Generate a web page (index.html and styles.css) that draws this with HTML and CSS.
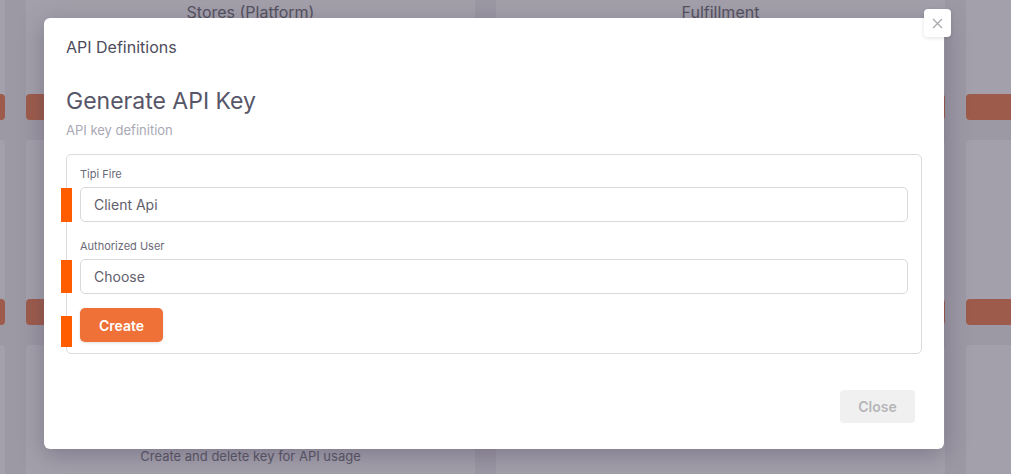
FILE: index.html
```html
<!DOCTYPE html>
<html>
<head>
<meta charset="utf-8">
<link rel="stylesheet" href="styles.css">
</head>
<body>
<div class="board">
  <div class="row">
    <div class="card"><div class="card-btn"></div></div>
    <div class="card"><div class="card-title">Stores (Platform)</div><div class="card-btn"></div></div>
    <div class="card"><div class="card-title">Fulfillment</div><div class="card-btn"></div></div>
    <div class="card"><div class="card-btn"></div></div>
  </div>
  <div class="row">
    <div class="card"><div class="card-btn"></div></div>
    <div class="card"><div class="card-btn"></div></div>
    <div class="card"><div class="card-btn"></div></div>
    <div class="card"><div class="card-btn"></div></div>
  </div>
  <div class="row">
    <div class="card"><div class="card-btn"></div></div>
    <div class="card"><div class="card-desc">Create and delete key for API usage</div><div class="card-btn"></div></div>
    <div class="card"><div class="card-btn"></div></div>
    <div class="card"><div class="card-btn"></div></div>
  </div>
</div>

<div class="overlay">
  <div class="modal">
    <button class="x-btn" aria-label="close">
      <svg width="11" height="11" viewBox="0 0 11 11"><path d="M1 1L10 10M10 1L1 10" stroke="#a9a9b0" stroke-width="1.3" fill="none"/></svg>
    </button>
    <div class="modal-header">API Definitions</div>
    <div class="modal-body">
      <h1 class="title">Generate API Key</h1>
      <div class="subtitle">API key definition</div>
      <div class="fieldset">
        <div class="field">
          <span class="marker m1"></span>
          <label class="label">Tipi Fire</label>
          <div class="input">Client Api</div>
        </div>
        <div class="field">
          <span class="marker m2"></span>
          <label class="label">Authorized User</label>
          <div class="input">Choose</div>
        </div>
        <div class="field actions">
          <span class="marker m3"></span>
          <button class="btn-create">Create</button>
        </div>
      </div>
    </div>
    <div class="modal-footer">
      <button class="btn-close">Close</button>
    </div>
  </div>
</div>
</body>
</html>
```

FILE: styles.css
```css
* { box-sizing: border-box; }
html, body { margin: 0; padding: 0; }
body {
  width: 1011px;
  height: 474px;
  overflow: hidden;
  background: #9c98a4;
  font-family: Inter, "Noto Sans", sans-serif;
  position: relative;
}
.board {
  display: flex;
  flex-direction: column;
  gap: 20px;
  margin-left: -444px;
  margin-top: -65px;
}
.row {
  display: flex;
  gap: 21px;
}
.card {
  flex: 0 0 449px;
  height: 185px;
  background: #a3a0ab;
  border-radius: 4px;
  position: relative;
  display: flex;
  flex-direction: column;
  align-items: center;
}
.card-title {
  margin-top: 67px;
  font-size: 16px;
  color: #55525f;
}
.card-desc {
  margin-top: auto;
  margin-bottom: 40px;
  font-size: 13px;
  color: #5a5766;
}
.card-btn {
  margin-top: auto;
  width: 100%;
  height: 26px;
  background: #9d5c4b;
  border-radius: 4px;
}
.card-desc + .card-btn { margin-top: 0; }

.overlay {
  position: absolute;
  inset: 0;
}
.modal {
  position: absolute;
  left: 44px;
  top: 18px;
  width: 900px;
  height: 431px;
  background: #fff;
  border-radius: 6px;
  box-shadow: 0 6px 24px rgba(60, 50, 80, 0.35);
  display: flex;
  flex-direction: column;
}
.x-btn {
  position: absolute;
  right: -7px;
  top: -9px;
  width: 27px;
  height: 28px;
  border: none;
  background: #fff;
  border-radius: 4px;
  box-shadow: 0 1px 4px rgba(0,0,0,0.12);
  display: flex;
  align-items: center;
  justify-content: center;
  padding: 0;
}
.modal-header {
  padding: 19px 22px 0;
  font-size: 16px;
  color: #4d4c5c;
  height: 58px;
}
.modal-body {
  padding: 0 22px;
}
.title {
  margin: 11px 0 0;
  font-size: 23px;
  font-weight: 400;
  color: #575668;
  line-height: 28px;
}
.subtitle {
  margin-top: 7px;
  font-size: 13px;
  color: #a9a8b4;
  line-height: 16px;
}
.fieldset {
  margin-top: 16px;
  border: 1px solid #dcdcdc;
  border-radius: 5px;
  padding: 12px 13px 11px;
  display: flex;
  flex-direction: column;
}
.field {
  position: relative;
}
.field + .field { margin-top: 17px; }
.field.actions { margin-top: 14px; }
.label {
  display: block;
  font-size: 11px;
  color: #6b6a78;
  line-height: 14px;
  margin-bottom: 6px;
}
.input {
  height: 35px;
  border: 1px solid #d9d9dd;
  border-radius: 5px;
  padding: 0 13px;
  font-size: 14px;
  color: #5f5e6c;
  display: flex;
  align-items: center;
}
.marker {
  position: absolute;
  left: -19px;
  width: 11px;
  background: #ff5c00;
}
.m1 { top: 21px; height: 34px; }
.m2 { top: 21px; height: 33px; }
.m3 { top: 8px; height: 31px; }
.btn-create {
  height: 34px;
  width: 83px;
  border: none;
  border-radius: 5px;
  background: #ef7138;
  color: #fff;
  font-family: Inter, "Noto Sans", sans-serif;
  font-weight: 600;
  font-size: 14px;
  box-shadow: 0 1px 3px rgba(0,0,0,0.12);
}
.modal-footer {
  margin-top: auto;
  padding: 0 29px 26px;
  display: flex;
  justify-content: flex-end;
}
.btn-close {
  width: 75px;
  height: 33px;
  border: none;
  border-radius: 4px;
  background: #f0f0f0;
  color: #b5b5b8;
  font-family: Inter, "Noto Sans", sans-serif;
  font-weight: 600;
  font-size: 14px;
}
```
